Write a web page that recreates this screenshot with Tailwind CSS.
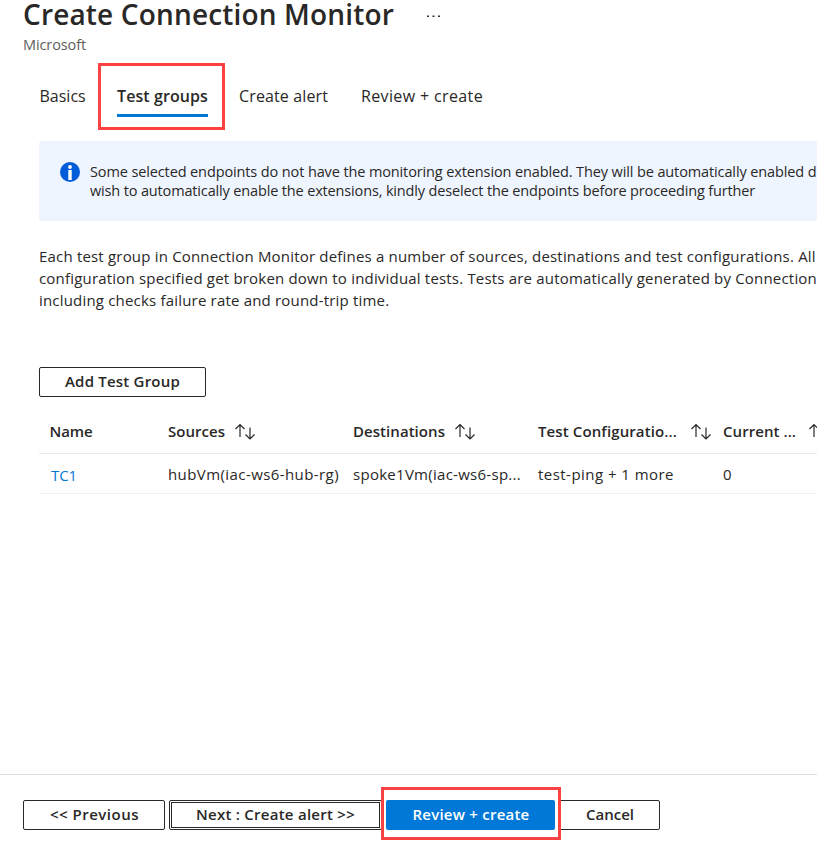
<!DOCTYPE html>
<html lang="en">
<head>
<meta charset="utf-8">
<title>Create Connection Monitor</title>
<script src="https://cdn.jsdelivr.net/npm/@tailwindcss/browser@4"></script>
</head>
<body class="w-[817px] h-[849px] overflow-hidden bg-white text-[#292827] font-['Open_Sans','Noto_Sans',sans-serif] whitespace-nowrap">
<svg class="hidden">
  <symbol id="sort" viewBox="0 0 22 19"><path d="M6 15V2.500M1.500 7L6 2.500 10.500 7M16 5.500v11.500M11.500 12.500L16 17l4.500-4.500" fill="none" stroke="#292827" stroke-width="1.200"/></symbol>
</svg>
<div class="flex flex-col h-full overflow-hidden">
  <header class="pl-[23px] h-[63px] shrink-0">
    <div class="flex items-start h-[30px]">
      <h1 class="text-[28px] leading-[29px] w-[404px] font-semibold tracking-[0.164px]">Create Connection Monitor</h1>
      <svg width="14" height="3" viewBox="0 0 14 3" class="mt-[15px]"><path d="M0 .5h2v1.500H0zM5.500 .5h2v1.500h-2zM11 .5h2v1.500h-2z" fill="#333"/></svg>
    </div>
    <p class="text-[14.500px] leading-[29px] text-[#605e5c] tracking-[-0.110px]">Microsoft</p>
  </header>

  <nav class="flex h-[78px] shrink-0 pl-[39.500px] text-[16px] leading-[24px]">
    <a class="w-[58.500px] pt-[21px]">Basics</a>
    <div class="w-[127px] h-[67px] border-3 border-[#fc4143] pt-[18px] pl-4">
      <a class="block w-[91px] h-[33px] border-b-3 border-[#0078d4] font-semibold tracking-[0.090px]">Test groups</a>
    </div>
    <a class="w-[122px] pt-[21px] pl-[14px] tracking-[0.130px]">Create alert</a>
    <a class="pt-[21px] pl-[14px] tracking-[0.370px]">Review + create</a>
  </nav>

  <main class="grow pl-[39px]">
    <div class="flex h-20 rounded-l-[3px] bg-[#eff5ff] pl-[21px] pt-[21px] text-[14.500px] leading-[19px]">
      <svg width="20" height="20" viewBox="0 0 20 20" class="shrink-0 mr-[10px]"><circle cx="10" cy="10" r="10" fill="#015cda"/><circle cx="10" cy="5" r="1.900" fill="#fff"/><path d="M8.300 8h3.400v10H8.300z" fill="#fff"/></svg>
      <div>
        <p class="tracking-[-0.119px]">Some selected endpoints do not have the monitoring extension enabled. They will be automatically enabled d</p>
        <p class="tracking-[-0.151px]">wish to automatically enable the extensions, kindly deselect the endpoints before proceeding further</p>
      </div>
    </div>

    <div class="mt-6 text-[15px] leading-[22px] tracking-[0.188px]">
      <p>Each test group in Connection Monitor defines a number of sources, destinations and test configurations. All</p>
      <p>configuration specified get broken down to individual tests. Tests are automatically generated by Connection</p>
      <p>including checks failure rate and round-trip time.</p>
    </div>

    <button class="block mt-[56px] w-[167px] h-[30px] rounded-[2px] border border-[#292827] pb-[2px] text-[15px] leading-[26px] font-semibold tracking-[0.205px]">Add Test Group</button>

    <div class="grid grid-cols-[129px_185px_185px_185px_94px] mt-3 text-[15px] overflow-hidden">
      <div class="col-span-5 grid grid-cols-subgrid h-[45px] items-center border-b border-[#e9e9e9] font-semibold">
        <span class="pl-[10.500px] tracking-[-0.100px]">Name</span>
        <div class="flex items-center"><span class="w-[66px] tracking-[0.030px]">Sources</span><svg width="22" height="19"><use href="#sort"/></svg></div>
        <div class="flex items-center"><span class="w-[101px] tracking-[0.050px]">Destinations</span><svg width="22" height="19"><use href="#sort"/></svg></div>
        <div class="flex items-center"><span class="w-[152px] tracking-[0.116px]">Test Configuratio...</span><svg width="22" height="19"><use href="#sort"/></svg></div>
        <div class="flex items-center overflow-hidden"><span class="w-[85px] shrink-0 tracking-[0.063px]">Current ...</span><svg width="22" height="19" class="shrink-0"><use href="#sort"/></svg></div>
      </div>
      <div class="col-span-5 grid grid-cols-subgrid h-[40px] items-center border-b border-[#efefef]">
        <a class="pl-[12px] pt-[3px] text-[#0078d4] tracking-[-0.100px]">TC1</a>
        <span class="pt-[2px] tracking-[0.417px]">hubVm(iac-ws6-hub-rg)</span>
        <span class="pt-[2px] tracking-[0.275px]">spoke1Vm(iac-ws6-sp...</span>
        <span class="pt-[2px] tracking-[0.460px]">test-ping + 1 more</span>
        <span class="pt-[2px]">0</span>
      </div>
    </div>
  </main>

  <footer class="flex gap-1 h-[75px] shrink-0 border-t border-[#dcdcdc] pl-[23px] pt-[25px] text-[15px] leading-[26px] font-semibold">
    <button class="w-[142px] h-[30px] rounded-[2px] border border-[#292827] pb-[2px] pl-px tracking-[0.490px]">&lt;&lt; Previous</button>
    <button class="w-[213px] h-[30px] rounded-[2px] border border-[#292827] p-px"><span class="block h-[26px] border border-[#292827] leading-[22px] tracking-[0.260px]">Next : Create alert &gt;&gt;</span></button>
    <div class="relative">
      <button class="block w-[169px] h-[30px] rounded-[2px] bg-[#0078d7] text-white pb-[2px] pl-px leading-[28px] tracking-[0.232px]">Review + create</button>
      <div class="absolute z-10 -left-[5px] -top-[13px] w-[180px] h-[53px] border-3 border-[#fc4143]"></div>
    </div>
    <button class="w-[101px] h-[30px] rounded-[2px] border border-[#292827] pb-[2px] pl-px">Cancel</button>
  </footer>
</div>
</body>
</html>
